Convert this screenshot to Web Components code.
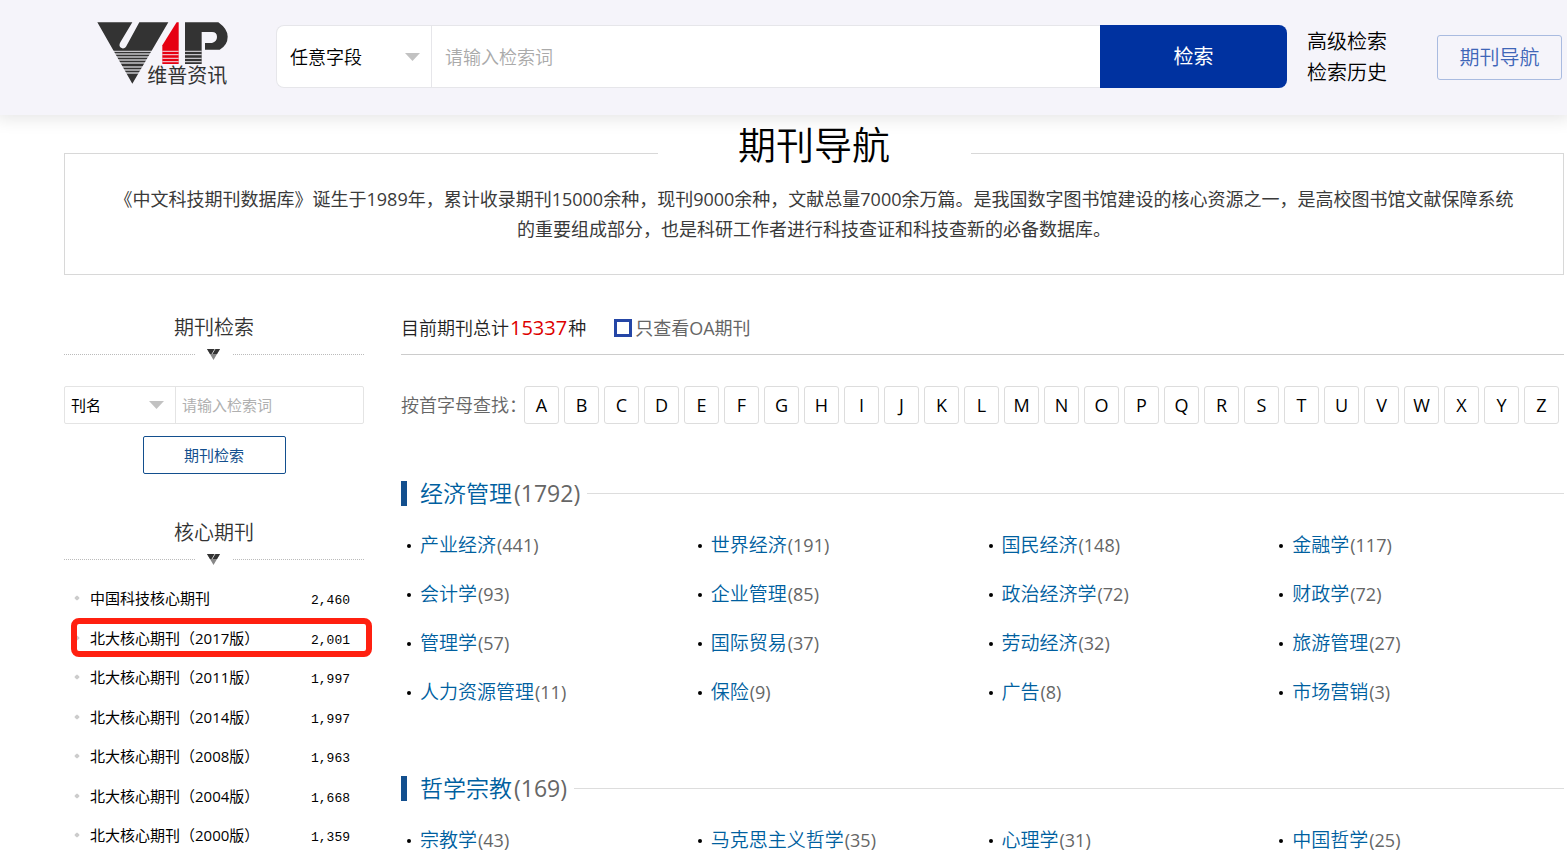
<!DOCTYPE html>
<html lang="zh-CN">
<head>
<meta charset="utf-8">
<title>期刊导航</title>
<style>
body{margin:0;background:#fff;color:#000;font-family:"Open Sans","Noto Sans CJK SC",sans-serif;font-size:18px;font-weight:350;line-height:30px}
.layout{display:grid;grid-template-columns:300px 1fr;column-gap:37px;margin:38px 3px 0 64px}
intro-panel{margin:38px 3px 0 64px}
journal-search{margin-top:21px}
.core{margin-top:44px}
core-list{margin-top:8px}
letter-index{margin-top:31px}
subject-group{margin-top:66px}
letter-index + subject-group{margin-top:54px}
</style>
</head>
<body>
<site-header></site-header>
<main>
<intro-panel heading="期刊导航">《中文科技期刊数据库》诞生于1989年，累计收录期刊15000余种，现刊9000余种，文献总量7000余万篇。是我国数字图书馆建设的核心资源之一，是高校图书馆文献保障系统<br>的重要组成部分，也是科研工作者进行科技查证和科技查新的必备数据库。</intro-panel>
<div class="layout">
<aside>
<side-title>期刊检索</side-title>
<journal-search></journal-search>
<side-title class="core">核心期刊</side-title>
<core-list>
<core-item count="2,460">中国科技核心期刊</core-item>
<core-item count="2,001" marked>北大核心期刊（2017版）</core-item>
<core-item count="1,997">北大核心期刊（2011版）</core-item>
<core-item count="1,997">北大核心期刊（2014版）</core-item>
<core-item count="1,963">北大核心期刊（2008版）</core-item>
<core-item count="1,668">北大核心期刊（2004版）</core-item>
<core-item count="1,359">北大核心期刊（2000版）</core-item>
</core-list>
</aside>
<section>
<total-bar total="15337"></total-bar>
<letter-index></letter-index>
<subject-group name="经济管理" count="1792">
<subject-item count="441">产业经济</subject-item><subject-item count="191">世界经济</subject-item><subject-item count="148">国民经济</subject-item><subject-item count="117">金融学</subject-item>
<subject-item count="93">会计学</subject-item><subject-item count="85">企业管理</subject-item><subject-item count="72">政治经济学</subject-item><subject-item count="72">财政学</subject-item>
<subject-item count="57">管理学</subject-item><subject-item count="37">国际贸易</subject-item><subject-item count="32">劳动经济</subject-item><subject-item count="27">旅游管理</subject-item>
<subject-item count="11">人力资源管理</subject-item><subject-item count="9">保险</subject-item><subject-item count="8">广告</subject-item><subject-item count="3">市场营销</subject-item>
</subject-group>
<subject-group name="哲学宗教" count="169">
<subject-item count="43">宗教学</subject-item><subject-item count="35">马克思主义哲学</subject-item><subject-item count="31">心理学</subject-item><subject-item count="25">中国哲学</subject-item>
</subject-group>
</section>
</div>
</main>
<script>
const define = (name, render, after) => customElements.define(name, class extends HTMLElement {
  connectedCallback() {
    if (this.shadowRoot) return;
    this.attachShadow({mode: 'open'}).innerHTML =
      '<style>:host,*{box-sizing:border-box}a{text-decoration:none;color:inherit}button,input,select{font:inherit;margin:0}</style>' + render(this);
    if (after) after(this);
  }
});

define('vip-logo', () => `
<style>:host{display:block;width:131px;height:64px}svg{display:block}text{font:400 60px "Noto Sans CJK SC",sans-serif}</style>
<svg width="132" height="72" viewBox="51 36 396 216" role="img" aria-label="维普资讯">
<g fill="#333">
<path d="M52 37H157L121 97Q116 107 121 112Q128 118 135 113L138 110L178 37H265L157 221Z"/>
<path d="M315 37H415Q443 57 443 80Q443 105 419 119H375V99H396Q411 94 411 81Q411 66 396 66H365V162H315Z"/>
</g>
<path fill="#e60012" d="M290 37H296V162H247V106Z"/>
<g stroke="#f5f4fa" stroke-width="4" opacity=".75">
<path d="M96 124H220M100 132H216M104 141H212M110 150H206M114 159H202M120 171H196M126 180H190M132 189H184"/>
<path d="M247 124H296M247 134H296M247 145H296M247 155H296M315 124H365M315 134H365M315 145H365M315 155H365"/>
</g>
<text x="202" y="219" fill="#333">维普资讯</text>
</svg>`);

define('drop-select', el => `
<style>
:host{display:block;position:relative}
select{appearance:none;width:100%;height:100%;border:0;background:none;padding:0 0 0 var(--indent,13px);color:#000;outline:0}
svg{position:absolute;right:11px;top:50%;margin-top:-4px;pointer-events:none}
</style>
<select aria-label="${el.getAttribute('label')}"><option>${el.getAttribute('value')}</option></select>
<svg width="15" height="8" viewBox="0 0 15 8"><path d="M0 0H15L7.500 8Z" fill="#c2c2c2"/></svg>`);

define('site-header', () => `
<style>
:host{display:block;position:relative;background:#f5f4fa;box-shadow:0 0 16px 4px rgba(0,0,0,.1)}
header{display:flex;align-items:center;height:115px;padding:0 5px 0 97px}
vip-logo{margin-bottom:7px}
form{flex:1;display:flex;height:63px;margin:0 20px 2px 48px}
.box{flex:1;display:flex;background:#fff;border:1px solid #e6e6ea;border-right:0;border-radius:8px 0 0 8px}
drop-select{width:155px;border-right:1px solid #e6e6ea}
input{flex:1;min-width:0;border:0;background:none;padding:0 13px;outline:0}
input::placeholder{color:#aaa;opacity:1}
button{width:187px;border:0;border-radius:0 8px 8px 0;background:#0032a0;color:#fff;font-size:20px;font-weight:400}
nav{display:flex;align-items:center;font-size:20px;gap:50px}
.links{display:grid;line-height:31px;margin-bottom:2px}
.nav{width:125px;height:45px;line-height:43px;text-align:center;border:1px solid #a9bbe0;border-radius:3px;color:#3f66b8}
</style>
<header>
<vip-logo></vip-logo>
<form onsubmit="return false"><div class="box"><drop-select label="检索字段" value="任意字段"></drop-select><input type="text" aria-label="检索词" placeholder="请输入检索词"></div><button>检索</button></form>
<nav><div class="links"><a href="#advanced">高级检索</a><a href="#history">检索历史</a></div><a class="nav" href="#journals">期刊导航</a></nav>
</header>`);

define('intro-panel', el => `
<style>
:host{display:block;border:1px solid #d8d8d8;padding-bottom:30px;text-align:center;color:#3a3a3a}
h1{width:313px;margin:-33px auto 0;background:#fff;font-size:38px;line-height:46px;font-weight:inherit;color:#000}
p{margin:17px 20px 0;font-weight:400}
</style>
<h1>${el.getAttribute('heading')}</h1><p><slot></slot></p>`);

define('side-title', () => `
<style>
:host{display:block;text-align:center}
h2{margin:0;font-size:20px;font-weight:inherit;line-height:30px;color:#333}
div{display:flex;align-items:center;justify-content:space-between;gap:12px;height:22px}
i{flex:1;border-top:1px dotted #bbb}
</style>
<h2><slot></slot></h2>
<div><i></i><svg width="14" height="12" viewBox="0 0 14 12"><path d="M0 1H13L6.500 12Z" fill="#888"/><path d="M0 1H13L10 6H3Z" fill="#333"/><path d="M8 1L5 6" stroke="#ccc"/></svg><i></i></div>`);

define('journal-search', () => `
<style>
:host{display:block;font-size:15px;font-weight:400}
form{display:grid;grid-template-columns:minmax(0,1fr);justify-items:center;gap:12px}
.box{display:flex;width:100%;height:38px;border:1px solid #e4e4e4;border-radius:2px}
drop-select{width:111px;border-right:1px solid #e4e4e4;--indent:6px}
input{flex:1;min-width:0;border:0;background:none;padding:0 6px;outline:0}
input::placeholder{color:#b0b0b0;opacity:1}
button{width:143px;height:38px;background:#fff;border:1px solid #134f8e;border-radius:2px;color:#134f8e}
</style>
<form onsubmit="return false"><div class="box"><drop-select label="刊物字段" value="刊名"></drop-select><input type="text" aria-label="刊物检索词" placeholder="请输入检索词"></div><button>期刊检索</button></form>`);

define('core-list', () => `<style>:host{display:block}::slotted(:nth-child(odd)){height:40px}::slotted(:nth-child(even)){height:39px}</style><slot></slot>`,
  el => { el.setAttribute('role', 'list'); });

define('core-item', el => `
<style>
:host{display:flex;align-items:baseline;position:relative;padding:0 14px 0 11px;font-size:15px;line-height:40px}
i{align-self:center;width:4px;height:4px;margin-right:11px;border-radius:1px;background:#ccc;transform:rotate(45deg)}
a{flex:1;font-weight:400}
span{font-family:"Liberation Mono",monospace;font-size:13px}
:host([marked])::after{content:"";position:absolute;inset:0 -8px 0 7px;border:6px solid #ff2010;border-radius:8px;pointer-events:none}
</style>
<i></i><a href="#core"><slot></slot></a><span>${el.getAttribute('count')}</span>`,
  el => { el.setAttribute('role', 'listitem'); });

define('total-bar', el => `
<style>
:host{display:flex;align-items:center;height:42px;padding-bottom:11px;border-bottom:1px solid #ccc;color:#222}
b{font-size:20px;font-weight:400;color:#d00}
.sum{display:flex;gap:1px}
label{display:flex;align-items:center;gap:3px;margin-left:28px;font-weight:400;color:#666}
input{appearance:none;width:18px;height:18px;border:3px solid #2546a6;background:#fff}
</style>
<span class="sum">目前期刊总计<b>${el.getAttribute('total')}</b>种</span><label><input type="checkbox">只查看OA期刊</label>`);

define('letter-index', () => `
<style>
:host{display:flex;color:#666}
span{width:123px;line-height:38px;white-space:nowrap}
nav{display:flex;gap:5px}
a{width:35px;height:38px;border:1px solid #ddd;border-radius:3px;line-height:36px;text-align:center;font-weight:400;color:#000}
</style>
<span>按首字母查找：</span><nav>${[...'ABCDEFGHIJKLMNOPQRSTUVWXYZ'].map(c => `<a href="#${c}">${c}</a>`).join('')}</nav>`);

define('subject-group', el => `
<style>
:host{display:block}
h2{display:flex;align-items:center;margin:0;font-size:23px;font-weight:inherit;line-height:30px;color:#666}
h2::before{content:"";width:6px;height:25px;margin-right:13px;background:#134f8e}
h2::after{content:"";flex:1;margin-left:7px;border-top:1px solid #ddd}
a{color:#005f9f;margin-right:2px}
span{font-weight:400}
.grid{display:grid;grid-template-columns:repeat(4,1fr);row-gap:19px;margin-top:22px}
</style>
<h2><a href="#subject">${el.getAttribute('name')}</a><span>(${el.getAttribute('count')})</span></h2>
<div class="grid"><slot></slot></div>`);

define('subject-item', el => `
<style>
:host{display:flex;align-items:center;font-size:19px;line-height:30px;padding-left:6px;color:#666}
i{width:4px;height:4px;margin:2px 9px 0 0;border-radius:2px;background:#000}
a{color:#005f9f;margin-right:1px}
span{font-size:18px;font-weight:400}
</style>
<i></i><a href="#subject"><slot></slot></a><span>(${el.getAttribute('count')})</span>`);
</script>
</body>
</html>
